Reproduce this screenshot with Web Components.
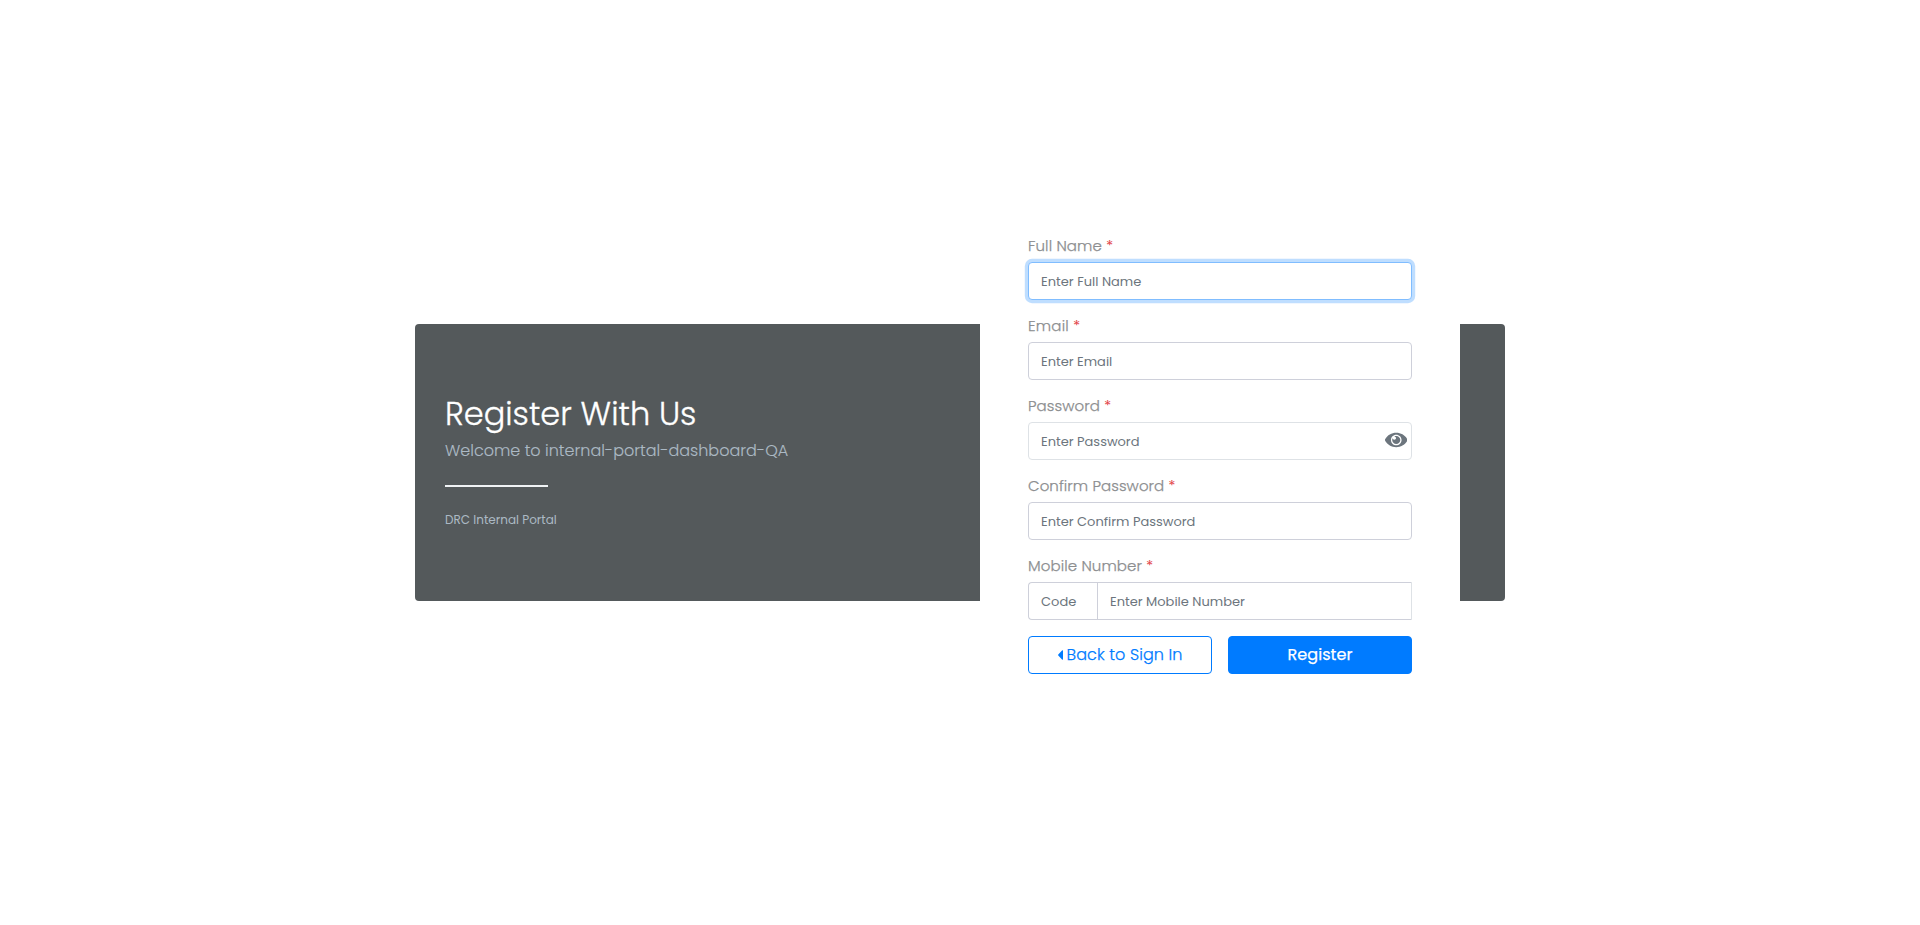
<!DOCTYPE html>
<html lang="en">
<head>
<meta charset="utf-8">
<title>Register</title>
<style>
html,body{margin:0;height:100%;background:#fff;overflow:hidden}
body{font-family:Poppins,Inter,"Open Sans",sans-serif;color:#5c6873}
</style>
</head>
<body>
<register-page></register-page>
<script>
class BaseElement extends HTMLElement {
  render(html) { this.attachShadow({mode: 'open'}).innerHTML = html; }
}

// One line of text whose tracking is adjusted to the requested width.
customElements.define('text-line', class extends BaseElement {
  connectedCallback() {
    this.render(`<style>:host{display:inline-block;white-space:nowrap}span{display:inline-block}</style><span><slot></slot></span>`);
    const span = this.shadowRoot.querySelector('span');
    const target = +this.getAttribute('width');
    const n = this.textContent.length;
    span.style.letterSpacing = ((target - span.getBoundingClientRect().width) / n) + 'px';
    this.style.width = target + 'px';
  }
});

customElements.define('intro-panel', class extends BaseElement {
  connectedCallback() {
    this.render(`<style>
      :host{display:flex;flex-direction:column;align-items:flex-start;box-sizing:border-box;width:565px;height:277px;padding:70px 30px 0;background:#54595b;border-radius:4px 0 0 4px}
      h1{margin:0;font-size:32px;line-height:39px;font-weight:300;color:#fff;-webkit-text-stroke:.3px #fff}
      .sub{margin:5px 0 0;font-size:16px;line-height:25px;font-weight:300;color:#acb9c4;-webkit-text-stroke:.12px #acb9c4}
      hr{width:103px;height:2px;border:0;margin:22px 0 23px;background:#f0f3f5}
      .foot{margin:0;font-size:12px;line-height:19px;color:#acb9c4}
      text-line{display:block}
    </style>
    <h1><text-line width="251.4">Register With Us</text-line></h1>
    <p class="sub"><text-line width="343.2">Welcome to internal-portal-dashboard-QA</text-line></p>
    <hr>
    <p class="foot"><text-line width="111.8">DRC Internal Portal</text-line></p>`);
  }
});

customElements.define('form-field', class extends BaseElement {
  connectedCallback() {
    this.render(`<style>
      :host{display:block;height:80px}
      .label{display:flex;gap:4px;height:21px;margin-bottom:6px;font-size:15px;line-height:21px;font-weight:300;color:#8c8e90}
      .label text-line{-webkit-text-stroke:.25px #8c8e90}
      .label b{font-weight:400;color:#e3484c}
      .box{display:flex;box-sizing:border-box;height:38px;border:1px solid #ced0da;border-radius:4px;background:#fff;font-size:13px;line-height:37px;padding-left:12px;color:#6c757d}
      :host([focused]) .box{border-color:#80bdff;box-shadow:0 0 0 3.2px rgba(0,123,255,.25)}
      :host([light]) .box{border-color:#dee2e6}
      :host([split]) .box{border-radius:4px 0 0 4px;border-right-color:#dee2e6}
    </style>
    <div class="label"><text-line width="${this.getAttribute('label-width')}">${this.getAttribute('label')}</text-line><b>*</b></div>
    <div class="box"><slot></slot></div>`);
  }
});

customElements.define('eye-icon', class extends BaseElement {
  connectedCallback() {
    this.render(`<style>:host{display:flex;align-items:center;margin-left:auto;padding-right:4px;height:34px}svg{display:block;width:22.5px;height:20px;fill:#6c757d}</style>
    <svg viewBox="0 0 576 512"><path d="M569.354 231.631C512.969 135.949 407.81 72 288 72 168.14 72 63.004 135.994 6.646 231.631a47.999 47.999 0 0 0 0 48.739C63.031 376.051 168.19 440 288 440c119.86 0 224.996-63.994 281.354-159.631a47.997 47.997 0 0 0 0-48.738zM288 392c-75.162 0-136-60.827-136-136 0-75.162 60.826-136 136-136 75.162 0 136 60.826 136 136 0 75.162-60.826 136-136 136zm104-136c0 57.438-46.562 104-104 104s-104-46.562-104-104c0-17.708 4.431-34.379 12.236-48.973l-.001.032c0 23.651 19.173 42.823 42.824 42.823s42.824-19.173 42.824-42.823c0-23.651-19.173-42.823-42.824-42.823l-.032.001C253.621 156.431 270.292 152 288 152c57.438 0 104 46.562 104 104z"/></svg>`);
  }
});

customElements.define('action-button', class extends BaseElement {
  connectedCallback() {
    this.render(`<style>
      :host{display:block;flex:1}
      button{display:flex;align-items:center;justify-content:center;width:100%;height:38px;box-sizing:border-box;padding:0 0 1px;border:1px solid #007bff;border-radius:4px;background:#fff;color:#007bff;font:inherit;font-size:16px;font-weight:300;line-height:25px;-webkit-text-stroke:.25px #007bff}
      :host([primary]) button{background:#007bff;color:#fff;font-weight:400;-webkit-text-stroke:.25px #fff}
    </style><button type="button"><slot></slot></button>`);
  }
});

customElements.define('register-form', class extends BaseElement {
  connectedCallback() {
    this.render(`<style>
      :host{display:block;box-sizing:border-box;width:480px;height:487px;padding:30px 48px 0;background:#fff}
      .code{box-sizing:border-box;width:57px;border-right:1px solid #ced0da;margin-right:12px}
      .actions{display:flex;gap:16px;margin-top:1px}
      .caret{width:5px;height:10px;fill:#007bff;margin-right:4px}
    </style>
    <form-field label="Full Name" label-width="74" focused><text-line width="100.3">Enter Full Name</text-line></form-field>
    <form-field label="Email" label-width="41"><text-line width="71.3">Enter Email</text-line></form-field>
    <form-field label="Password" label-width="72" light><text-line width="98.5">Enter Password</text-line><eye-icon></eye-icon></form-field>
    <form-field label="Confirm Password" label-width="136.3"><text-line width="154.4">Enter Confirm Password</text-line></form-field>
    <form-field label="Mobile Number" label-width="114" split><div class="code"><text-line width="35.4">Code</text-line></div><text-line width="134.9">Enter Mobile Number</text-line></form-field>
    <div class="actions">
      <action-button><svg class="caret" viewBox="0 0 5 10"><path d="M5 .8v8.4a.6.6 0 0 1-1 .4L.3 5.5a.7.7 0 0 1 0-1L4 .4a.6.6 0 0 1 1 .4z"/></svg><text-line width="116">Back to Sign In</text-line></action-button>
      <action-button primary><text-line width="65">Register</text-line></action-button>
    </div>`);
  }
});

customElements.define('register-page', class extends BaseElement {
  connectedCallback() {
    this.render(`<style>
      :host{display:flex;align-items:flex-start;justify-content:center;box-sizing:border-box;width:100%;height:100vh;padding-top:205px}
      intro-panel,.edge{margin-top:119px}
      .edge{width:45px;height:277px;background:#54595b;border-radius:0 4px 4px 0}
    </style>
    <intro-panel></intro-panel><register-form></register-form><div class="edge"></div>`);
  }
});
</script>
</body>
</html>
